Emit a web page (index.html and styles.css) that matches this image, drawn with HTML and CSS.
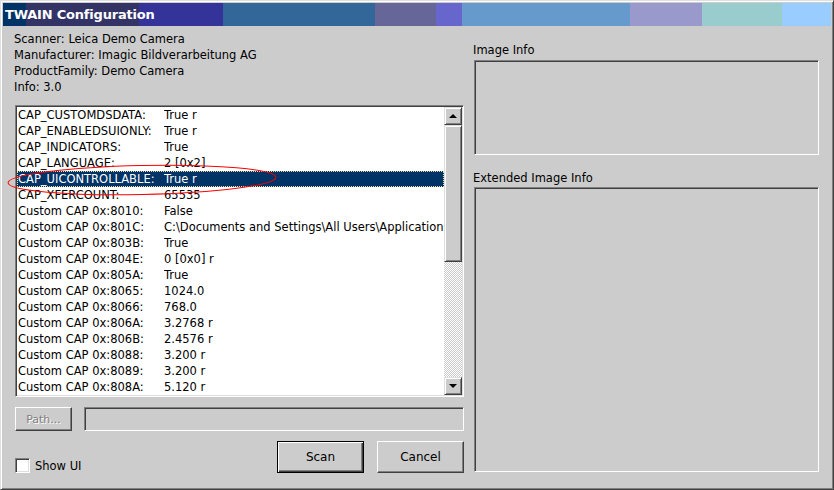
FILE: index.html
```html
<!DOCTYPE html>
<html>
<head>
<meta charset="utf-8">
<link rel="stylesheet" href="styles.css">
</head>
<body>
<div class="window">
  <div class="titlebar"><span class="title">TWAIN Configuration</span></div>
  <div class="content">
    <div class="left">
      <div class="info">
        <div>Scanner: Leica Demo Camera</div>
        <div>Manufacturer: Imagic Bildverarbeitung AG</div>
        <div>ProductFamily: Demo Camera</div>
        <div>Info: 3.0</div>
      </div>
      <div class="listbox">
        <div class="rows">
          <div class="row"><span>CAP_CUSTOMDSDATA:</span><span>True r</span></div>
          <div class="row"><span>CAP_ENABLEDSUIONLY:</span><span>True r</span></div>
          <div class="row"><span>CAP_INDICATORS:</span><span>True</span></div>
          <div class="row"><span>CAP_LANGUAGE:</span><span>2 [0x2]</span></div>
          <div class="row selected"><span>CAP_UICONTROLLABLE:</span><span>True r</span></div>
          <div class="row"><span>CAP_XFERCOUNT:</span><span>65535</span></div>
          <div class="row"><span>Custom CAP 0x:8010:</span><span>False</span></div>
          <div class="row"><span>Custom CAP 0x:801C:</span><span>C:\Documents and Settings\All Users\Application</span></div>
          <div class="row"><span>Custom CAP 0x:803B:</span><span>True</span></div>
          <div class="row"><span>Custom CAP 0x:804E:</span><span>0 [0x0] r</span></div>
          <div class="row"><span>Custom CAP 0x:805A:</span><span>True</span></div>
          <div class="row"><span>Custom CAP 0x:8065:</span><span>1024.0</span></div>
          <div class="row"><span>Custom CAP 0x:8066:</span><span>768.0</span></div>
          <div class="row"><span>Custom CAP 0x:806A:</span><span>3.2768 r</span></div>
          <div class="row"><span>Custom CAP 0x:806B:</span><span>2.4576 r</span></div>
          <div class="row"><span>Custom CAP 0x:8088:</span><span>3.200 r</span></div>
          <div class="row"><span>Custom CAP 0x:8089:</span><span>3.200 r</span></div>
          <div class="row"><span>Custom CAP 0x:808A:</span><span>5.120 r</span></div>
        </div>
        <div class="scrollbar">
          <div class="sbtn"><span class="arrow up"></span></div>
          <div class="thumb"></div>
          <div class="track"></div>
          <div class="sbtn"><span class="arrow down"></span></div>
        </div>
        <svg class="mark" width="290" height="40" viewBox="0 0 290 40"><ellipse cx="135" cy="20" rx="134" ry="14.5" fill="none" stroke="#ff0000" stroke-width="1" transform="rotate(-1.2 135 20)"/></svg>
      </div>
      <div class="pathrow">
        <div class="btn disabled pathbtn">Path...</div>
        <div class="field"></div>
      </div>
      <div class="bottomrow">
        <label class="check"><span class="box"></span>Show UI</label>
        <div class="buttons">
          <div class="btn default">Scan</div>
          <div class="btn">Cancel</div>
        </div>
      </div>
    </div>
    <div class="right">
      <div class="label">Image Info</div>
      <div class="panel small"></div>
      <div class="label second">Extended Image Info</div>
      <div class="panel big"></div>
    </div>
  </div>
</div>
</body>
</html>
```

FILE: styles.css
```css
* { box-sizing: border-box; }
html, body { margin: 0; padding: 0; }
body {
  font-family: "DejaVu Sans", sans-serif;
  font-size: 11.5px;
  color: #000;
  background: #ccc;
}
.window {
  width: 834px;
  height: 490px;
  background: #cccccc;
  border: 1px solid;
  border-color: #dfdfdf #404040 #404040 #dfdfdf;
  box-shadow: inset 1px 1px #fff, inset -1px -1px #808080;
  padding: 2px;
  display: flex;
  flex-direction: column;
}
.titlebar {
  height: 23px;
  flex: none;
  display: flex;
  align-items: center;
  padding-left: 2px;
  background: linear-gradient(to right,
    #003366 0, #003366 23px,
    #333366 23px, #333366 136px,
    #333399 136px, #333399 220px,
    #336699 220px, #336699 372px,
    #666699 372px, #666699 433px,
    #6666cc 433px, #6666cc 459px,
    #6699cc 459px, #6699cc 627px,
    #9999cc 627px, #9999cc 699px,
    #99cccc 699px, #99cccc 779px,
    #99ccff 779px, #99ccff 100%);
}
.title {
  color: #fff;
  font-weight: bold;
  font-size: 13px;
  letter-spacing: -0.2px;
}
.content {
  flex: 1;
  display: flex;
}
.left {
  width: 461px;
  padding-left: 11px;
  padding-top: 5px;
  display: flex;
  flex-direction: column;
}
.info { line-height: 16px; }
.listbox {
  position: relative;
  margin-top: 10px;
  margin-left: 1px;
  height: 292px;
  border: 1px solid;
  border-color: #808080 #fff #fff #808080;
  box-shadow: inset 1px 1px #404040, inset -1px -1px #dfdfdf;
  padding: 1px;
  display: flex;
}
.rows {
  flex: 1;
  background: #fff;
  overflow: hidden;
}
.row {
  display: grid;
  grid-template-columns: 146px 1fr;
  height: 16px;
  line-height: 16px;
  padding-left: 1px;
  white-space: nowrap;
}
.row span { overflow: hidden; }
.row.selected {
  background: #003366;
  color: #fff;
  outline: 1px dotted #e8e0a0;
  outline-offset: -1px;
}
.mark {
  position: absolute;
  left: -9px;
  top: 54px;
  overflow: visible;
  pointer-events: none;
}
.scrollbar {
  width: 18px;
  display: flex;
  flex-direction: column;
}
.sbtn, .thumb {
  background: #ccc;
  border: 1px solid;
  border-color: #dfdfdf #404040 #404040 #dfdfdf;
  box-shadow: inset 1px 1px #fff, inset -1px -1px #808080;
}
.sbtn {
  height: 18px;
  display: flex;
  align-items: center;
  justify-content: center;
}
.thumb { height: 137px; }
.track {
  flex: 1;
  background-color: #fff;
  background-image: repeating-conic-gradient(#ccc 0 25%, #fff 0 50%);
  background-size: 2px 2px;
}
.arrow {
  width: 0;
  height: 0;
  border-left: 4px solid transparent;
  border-right: 4px solid transparent;
}
.arrow.up { border-bottom: 4px solid #000; }
.arrow.down { border-top: 4px solid #000; }
.pathrow {
  margin-top: 10px;
  margin-left: 1px;
  display: flex;
  gap: 12px;
  height: 24px;
}
.btn {
  background: #ccc;
  border: 1px solid;
  border-color: #fff #404040 #404040 #fff;
  box-shadow: inset -1px -1px #808080;
  display: flex;
  align-items: center;
  justify-content: center;
}
.pathbtn { width: 57px; font-size: 11px; }
.btn.disabled {
  color: #808080;
  text-shadow: 1px 1px #fff;
}
.field {
  flex: 1;
  border: 1px solid;
  border-color: #808080 #fff #fff #808080;
  box-shadow: inset 1px 1px #404040;
}
.bottomrow {
  margin-top: 10px;
  margin-left: 1px;
  display: flex;
  justify-content: space-between;
  align-items: flex-end;
}
.check {
  display: flex;
  align-items: center;
  gap: 5px;
  margin-bottom: 0;
}
.box {
  width: 15px;
  height: 15px;
  background: #fff;
  border: 1px solid;
  border-color: #808080 #fff #fff #808080;
  box-shadow: inset 1px 1px #404040, inset -1px -1px #dfdfdf;
}
.buttons {
  display: flex;
  gap: 13px;
}
.buttons .btn {
  width: 87px;
  height: 32px;
  font-size: 12px;
}
.btn.default {
  border: 1px solid #000;
  box-shadow: inset 1px 1px #fff, inset -1px -1px #404040, inset -2px -2px #808080;
}
.right {
  width: 346px;
  margin-left: 9px;
  padding-top: 16px;
  display: flex;
  flex-direction: column;
}
.label { line-height: 16px; height: 16px; }
.label.second { margin-top: 15px; }
.panel {
  margin-left: 1px;
  border: 1px solid;
  border-color: #808080 #fff #fff #808080;
  box-shadow: inset 1px 1px #404040;
}
.panel.small { height: 95px; margin-top: 2px; }
.panel.big { height: 285px; margin-top: 1px; }
```
